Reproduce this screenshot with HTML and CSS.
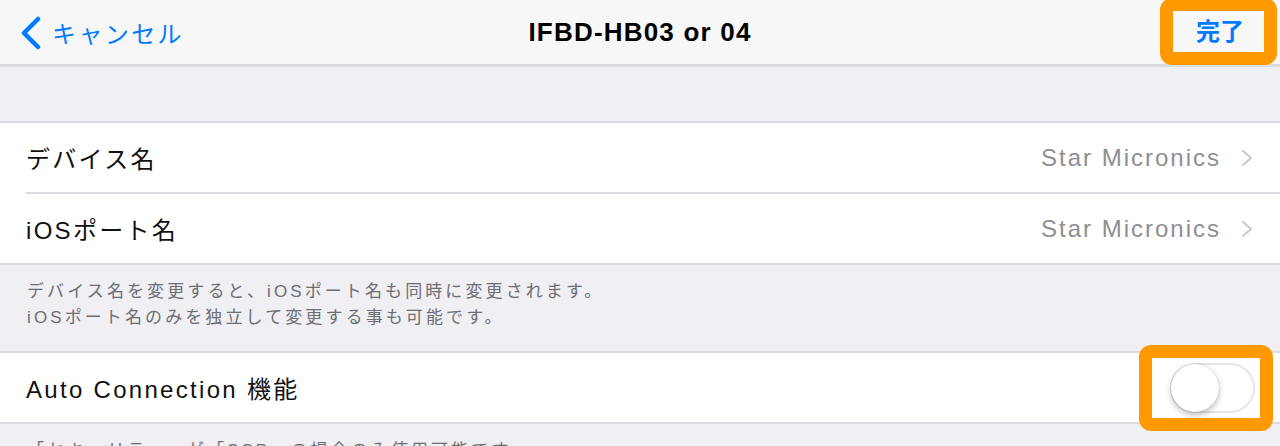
FILE: index.html
```html
<!DOCTYPE html>
<html lang="ja">
<head>
  <meta charset="UTF-8">
  <title>IFBD-HB03 or 04</title>
  <link rel="stylesheet" href="styles.css">
</head>
<body>
  <header class="navbar">
    <a class="nav-back">
      <svg class="back-chevron" viewBox="0 0 24 34" width="24" height="34">
        <path d="M19 3 L5 17 L19 31" fill="none" stroke="#007aff" stroke-width="4.5" stroke-linecap="round" stroke-linejoin="round"/>
      </svg>
      <span>キャンセル</span>
    </a>
    <h1 class="nav-title">IFBD-HB03 or 04</h1>
    <a class="nav-done">完了</a>
    <div class="mark mark-done"></div>
  </header>

  <main class="content">
    <div class="gap"></div>

    <section class="group">
      <div class="row">
        <span class="row-label">デバイス名</span>
        <span class="row-detail">Star Micronics</span>
        <svg class="row-chevron" viewBox="0 0 12 18" width="12" height="18">
          <path d="M2 2 L10 9 L2 16" fill="none" stroke="#c7c7cc" stroke-width="2" stroke-linecap="round" stroke-linejoin="round"/>
        </svg>
      </div>
      <div class="row">
        <span class="row-label">iOSポート名</span>
        <span class="row-detail">Star Micronics</span>
        <svg class="row-chevron" viewBox="0 0 12 18" width="12" height="18">
          <path d="M2 2 L10 9 L2 16" fill="none" stroke="#c7c7cc" stroke-width="2" stroke-linecap="round" stroke-linejoin="round"/>
        </svg>
      </div>
    </section>
    <p class="group-footer">デバイス名を変更すると、iOSポート名も同時に変更されます。<br>iOSポート名のみを独立して変更する事も可能です。</p>

    <section class="group">
      <div class="row">
        <span class="row-label">Auto Connection 機能</span>
        <div class="toggle-wrap">
          <div class="toggle"><div class="knob"></div></div>
          <div class="mark mark-toggle"></div>
        </div>
      </div>
    </section>
    <p class="group-footer">「セキュリティ」が「SSP」の場合のみ使用可能です。</p>
  </main>
</body>
</html>
```

FILE: styles.css
```css
:root {
  --nav-bg: #f7f7f8;
  --group-bg: #efeff4;
  --line: #dcdce0;
  --blue: #007aff;
  --mark: #ff9900;
}

body {
  margin: 0;
  background-color: var(--group-bg);
  font-family: "Liberation Sans", "Noto Sans CJK JP", sans-serif;
  color: #000;
  overflow: hidden;
}

.navbar {
  position: relative;
  height: 64px;
  display: flex;
  align-items: center;
  justify-content: space-between;
  background-color: var(--nav-bg);
  border-bottom: 3px solid var(--line);
}

.nav-back {
  display: flex;
  align-items: center;
  gap: 9px;
  padding-left: 19px;
  box-sizing: border-box;
  color: var(--blue);
  font-size: 24px;
  letter-spacing: 2.4px;
  width: 300px;
}

.back-chevron {
  margin-top: 1px;
}

.nav-title {
  margin: 0;
  font-size: 26px;
  font-weight: bold;
  letter-spacing: 1.2px;
}

.nav-done {
  width: 300px;
  text-align: right;
  padding-right: 36px;
  margin-bottom: 6px;
  box-sizing: border-box;
  color: var(--blue);
  font-size: 24px;
  font-weight: bold;
}

/* orange highlight frames */
.mark {
  position: absolute;
  border: 13px solid var(--mark);
  border-radius: 12px;
  box-sizing: border-box;
}

.mark-done {
  left: 1160px;
  top: -2px;
  width: 117px;
  height: 67px;
}

.mark-toggle {
  left: -31px;
  top: -18px;
  width: 134px;
  height: 86px;
}

.gap {
  height: 54px;
}

.group {
  background-color: #fff;
  border-top: 2px solid var(--line);
  border-bottom: 2px solid var(--line);
}

.row {
  height: 69px;
  display: flex;
  align-items: center;
  margin-left: 26px;
  padding-right: 27px;
}

.row + .row {
  border-top: 2px solid var(--line);
}

.row-label {
  flex: 1;
  font-size: 24px;
  letter-spacing: 2.3px;
  color: #111;
}

.row-detail {
  color: #8e8e93;
  font-size: 24px;
  letter-spacing: 2px;
  margin-right: 20px;
}

.group-footer {
  margin: 0;
  padding: 14px 27px 20px;
  color: #6d6d72;
  font-size: 17px;
  line-height: 26px;
  letter-spacing: 3.1px;
}

.toggle-wrap {
  position: relative;
  margin-right: -2px;
}

.toggle {
  width: 85px;
  height: 50px;
  border: 2px solid #e5e5ea;
  border-radius: 27px;
  box-sizing: border-box;
  background-color: #fff;
}

.knob {
  width: 48px;
  height: 48px;
  margin: -1px 0 0 -1px;
  border-radius: 50%;
  background-color: #fff;
  box-shadow: 0 3px 6px rgba(0, 0, 0, 0.25), 0 0 1px rgba(0, 0, 0, 0.3);
}
```
